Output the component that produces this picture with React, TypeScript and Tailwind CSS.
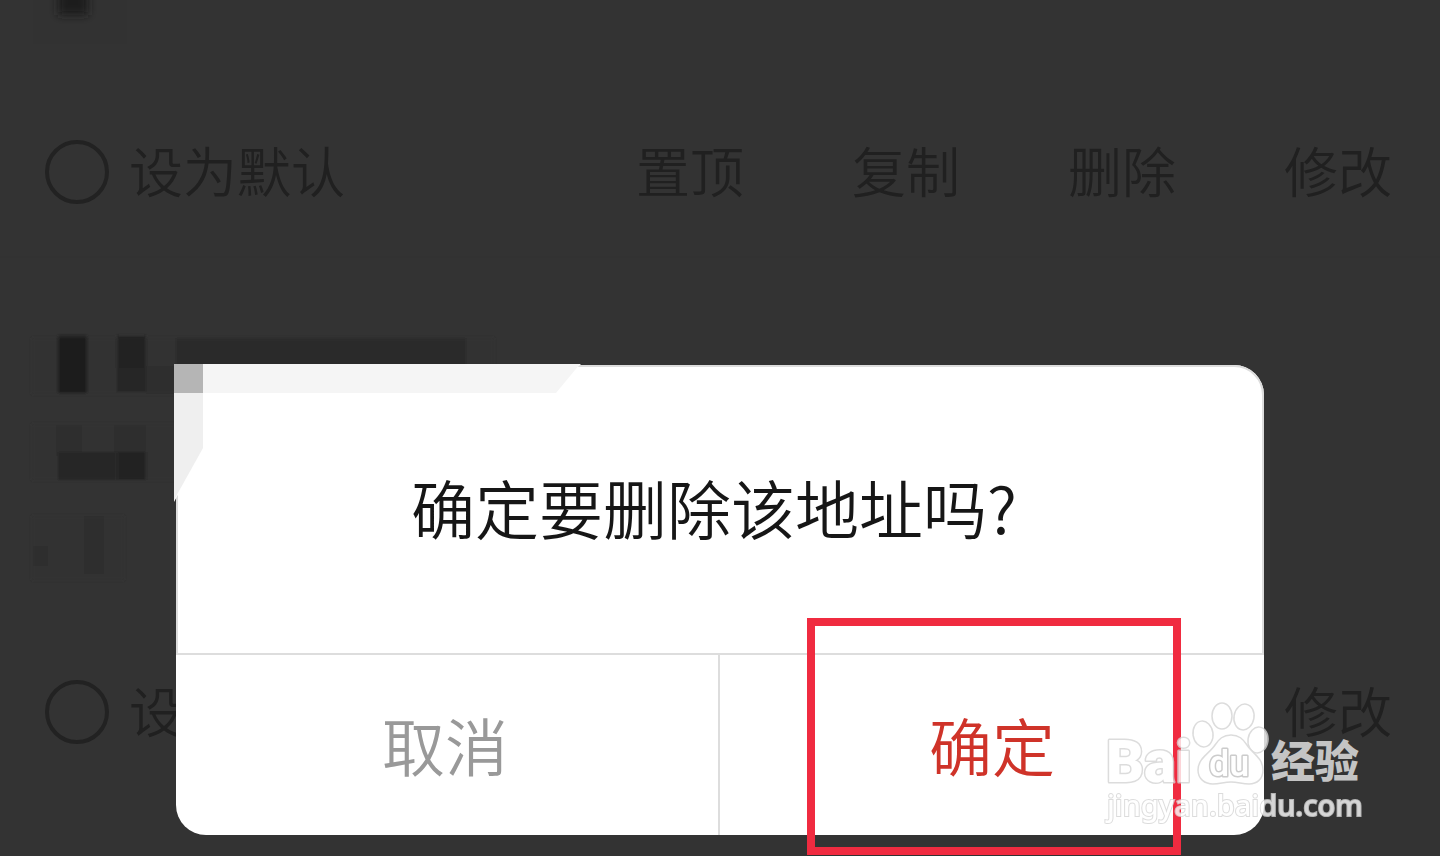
import React from "react";

const ACTIONS = ["置顶", "复制", "删除", "修改"];

function AddressFooter({ id }: { id: string }) {
  return (
    <div className="flex h-20 items-center justify-between pl-[45px] pr-[48px]">
      <div className="flex items-center gap-5">
        <input
          id={id}
          type="radio"
          name="default-address"
          className="size-16 shrink-0 appearance-none rounded-full border-4 border-[#222222]"
        />
        <label htmlFor={id} className="whitespace-nowrap pt-1 text-[54px] leading-[64px]">
          设为默认
        </label>
      </div>
      <div className="flex gap-27 pt-1">
        {ACTIONS.map((action) => (
          <button key={action} type="button" className="whitespace-nowrap text-[54px] leading-[64px]">
            {action}
          </button>
        ))}
      </div>
    </div>
  );
}

function MaskedName() {
  return (
    <svg width="130" height="50" viewBox="0 0 130 50" aria-hidden="true" className="block">
      <defs>
        <filter id="soft-name" x="-50%" y="-50%" width="200%" height="200%">
          <feGaussianBlur stdDeviation="4" />
        </filter>
      </defs>
      <rect x="33" y="0" width="94" height="44" fill="#323232" />
      <rect x="58" y="-12" width="30" height="27" fill="#1d1d1d" filter="url(#soft-name)" />
    </svg>
  );
}

function MaskedAddress() {
  return (
    <svg width="600" height="300" viewBox="0 320 600 300" aria-hidden="true" className="block">
      <defs>
        <filter id="soft-address" x="-10%" y="-10%" width="120%" height="120%">
          <feGaussianBlur stdDeviation="1.5" />
        </filter>
      </defs>
      <g filter="url(#soft-address)">
        <rect x="32" y="338" width="144" height="56" fill="#323232" />
        <rect x="58" y="336" width="29" height="57" fill="#1f1f1f" />
        <rect x="117" y="336" width="29" height="33" fill="#202020" />
        <rect x="117" y="368" width="29" height="24" fill="#282828" />
        <rect x="146" y="366" width="28" height="28" fill="#2f2f2f" />
        <rect x="176" y="338" width="290" height="40" fill="#2c2c2c" />
        <rect x="466" y="338" width="28" height="40" fill="#303030" />
        <rect x="32" y="424" width="144" height="56" fill="#323232" />
        <rect x="56" y="426" width="26" height="30" fill="#2e2e2e" />
        <rect x="114" y="426" width="32" height="28" fill="#2d2d2d" />
        <rect x="58" y="452" width="58" height="28" fill="#282828" />
        <rect x="58" y="452" width="24" height="28" fill="#262626" />
        <rect x="117" y="452" width="29" height="28" fill="#242424" />
        <rect x="32" y="516" width="92" height="64" fill="#323232" />
        <rect x="34" y="546" width="14" height="20" fill="#2d2d2d" />
        <rect x="84" y="516" width="20" height="58" fill="#2d2d2d" />
      </g>
    </svg>
  );
}

function CornerMask() {
  return (
    <svg
      width="410"
      height="140"
      viewBox="174 364 410 140"
      aria-hidden="true"
      className="pointer-events-none absolute -left-0.5 -top-px"
    >
      <polygon points="174,364 581,364 548,394 204,394 204,447 174,502" fill="#ffffff" />
      <polygon points="203,364 580,364 556,393 203,393" fill="#f5f5f5" />
      <polygon points="174,393 203,393 203,448 174,500" fill="#efefef" />
      <rect x="174" y="364" width="29" height="29" fill="#b5b5b5" />
    </svg>
  );
}

function Watermark() {
  return (
    <svg
      width="270"
      height="134"
      viewBox="1100 696 270 134"
      className="pointer-events-none absolute bottom-[26px] right-[70px]"
      role="img"
      aria-label="Baidu 经验"
    >
      <g fill="#ffffff" stroke="#d4d4d4" strokeWidth="1.5" opacity="0.8" strokeLinejoin="round">
        <text
          x="1106"
          y="782"
          fontSize="59"
          fontWeight="900"
          strokeWidth="3"
          paintOrder="stroke"
          fontFamily="Roboto, 'Liberation Sans', sans-serif"
        >
          Bai
        </text>
        <ellipse cx="1203" cy="734" rx="10" ry="13" transform="rotate(-8 1203 734)" />
        <ellipse cx="1222" cy="716" rx="10" ry="13" />
        <ellipse cx="1244" cy="717" rx="10" ry="13" transform="rotate(10 1244 717)" />
        <ellipse cx="1258" cy="740" rx="10" ry="13" transform="rotate(8 1258 740)" />
        <path d="M1231 735c-8 0-12 4-16 10-5 8-17 13-17 25 0 9 7 14 15 14 7 0 11-2 18-2s11 2 18 2c8 0 14-5 14-14 0-12-11-17-16-25-4-6-8-10-16-10z" />
        <text
          x="1209"
          y="776"
          fontSize="36"
          fontWeight="500"
          stroke="#c0c0c0"
          strokeWidth="3"
          paintOrder="stroke"
          fontFamily="Roboto, 'Liberation Sans', sans-serif"
        >
          du
        </text>
      </g>
      <text
        x="1271"
        y="778"
        fontSize="44"
        fontWeight="900"
        fill="#c4c4c4"
        fontFamily="'Noto Sans CJK SC', sans-serif"
      >
        经验
      </text>
      <text
        x="1107"
        y="816"
        fontSize="29"
        fontWeight="500"
        fill="#ffffff"
        stroke="#d4d4d4"
        strokeWidth="2"
        paintOrder="stroke"
        opacity="0.8"
        fontFamily="'Noto Sans', 'Open Sans', sans-serif"
      >
        jingyan.baidu.com
      </text>
    </svg>
  );
}

export default function App() {
  return (
    <div className="relative h-screen overflow-hidden bg-[#333333] font-['Liberation_Sans','Noto_Sans_CJK_SC',sans-serif] font-[350] text-[#202020]">
      <main>
        <section className="flex flex-col gap-[82px] border-b-2 border-[#323232] pb-11">
          <MaskedName />
          <AddressFooter id="address-1" />
        </section>
        <section className="flex flex-col gap-[52px] pt-[62px]">
          <MaskedAddress />
          <AddressFooter id="address-2" />
        </section>
      </main>

      <div className="absolute inset-0 px-44 pt-[365px]">
        <div
          role="dialog"
          aria-modal="true"
          aria-labelledby="dialog-title"
          className="relative rounded-[30px] bg-white"
        >
          <div className="flex h-[290px] items-center justify-center rounded-t-[30px] border-2 border-[#dddddd] pb-2 pr-3">
            <h1
              id="dialog-title"
              className="whitespace-nowrap font-['Noto_Sans_CJK_SC',sans-serif] text-[64px] font-[350] leading-[80px] text-[#161616]"
            >
              确定要删除该地址吗?
            </h1>
          </div>
          <div className="grid h-[180px] grid-cols-2">
            <button
              type="button"
              className="border-r-2 border-[#dddddd] pr-1 pt-2 text-[63px] leading-[72px] text-[#999999]"
            >
              取消
            </button>
            <button type="button" className="relative pt-2 text-[63px] leading-[72px] text-[#cf3329]">
              确定
              <span className="pointer-events-none absolute -bottom-5 -top-[37px] left-[87px] right-[83px] border-8 border-[#f02b40]" />
            </button>
          </div>
          <CornerMask />
        </div>
      </div>

      <Watermark />
    </div>
  );
}
